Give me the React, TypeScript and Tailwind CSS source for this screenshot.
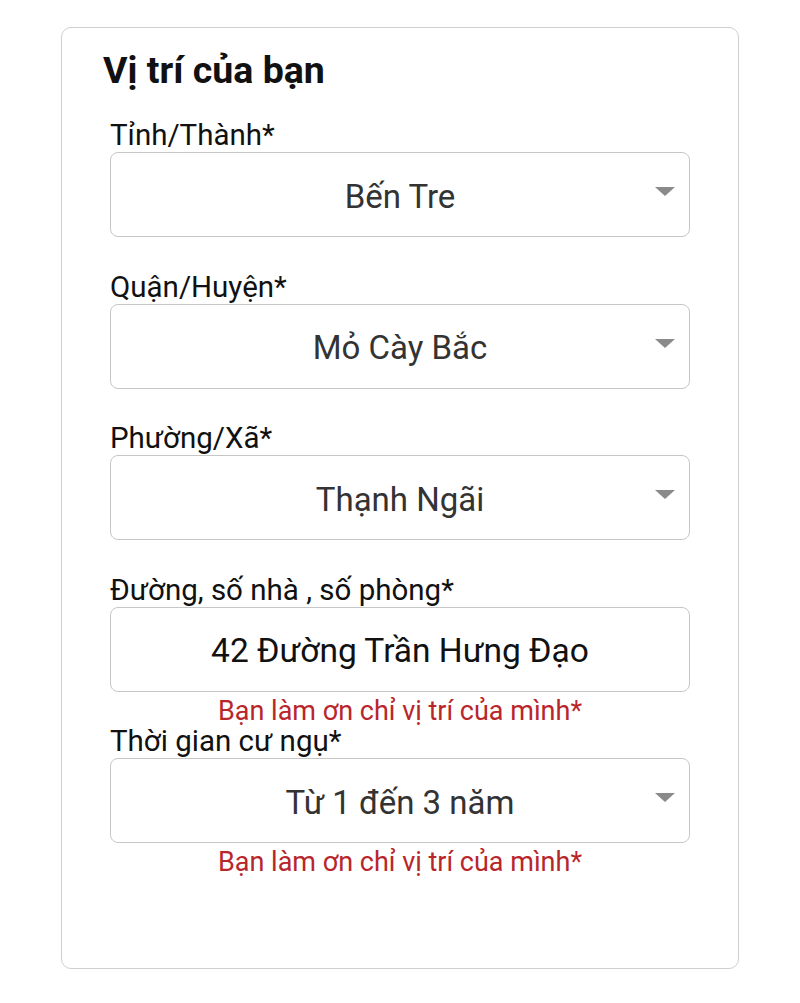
const FIELDS = [
  { label: "Tỉnh/Thành*", value: "Bến Tre", select: true, error: false },
  { label: "Quận/Huyện*", value: "Mỏ Cày Bắc", select: true, error: false },
  { label: "Phường/Xã*", value: "Thạnh Ngãi", select: true, error: false },
  { label: "Đường, số nhà , số phòng*", value: "42 Đường Trần Hưng Đạo", select: false, error: true },
  { label: "Thời gian cư ngụ*", value: "Từ 1 đến 3 năm", select: true, error: true },
];

function Field({ label, value, select, error }: (typeof FIELDS)[number]) {
  return (
    <div className="flex flex-col">
      <label className="h-[30px] whitespace-nowrap text-[29.5px] leading-[30px] text-[#111]">{label}</label>
      <div className="relative mt-[2px] flex h-[85px] items-center justify-center rounded-[8px] border border-[#c6c6c6] bg-white pt-[4px]">
        <span className={select ? "text-[33px] text-[#333]" : "text-[33.5px] text-[#111]"}>{value}</span>
        {select && (
          <svg className="absolute right-[14px] top-[34px]" width="20" height="9" viewBox="0 0 20 9">
            <path d="M0 0h20L10 9z" fill="#8a8a8a" />
          </svg>
        )}
      </div>
      {error ? (
        <p className="h-[34.5px] whitespace-nowrap pt-[2px] text-center text-[27px] leading-[34px] text-[#b8262b]">
          Bạn làm ơn chỉ vị trí của mình*
        </p>
      ) : (
        <div className="h-[34.5px]" />
      )}
    </div>
  );
}

export default function App() {
  return (
    <div className="min-h-screen bg-white pt-[27px]" style={{ fontFamily: "Roboto, 'Noto Sans', sans-serif" }}>
      <div className="mx-auto flex h-[942px] w-[678px] flex-col rounded-[10px] border border-[#cfcfcf] px-[48px] pt-[22px]">
        <h2 className="-ml-[7px] mb-[30px] h-[40px] text-[37.5px] font-bold leading-[40px] text-[#111]">Vị trí của bạn</h2>
        {FIELDS.map((f) => (
          <Field key={f.label} {...f} />
        ))}
      </div>
    </div>
  );
}
